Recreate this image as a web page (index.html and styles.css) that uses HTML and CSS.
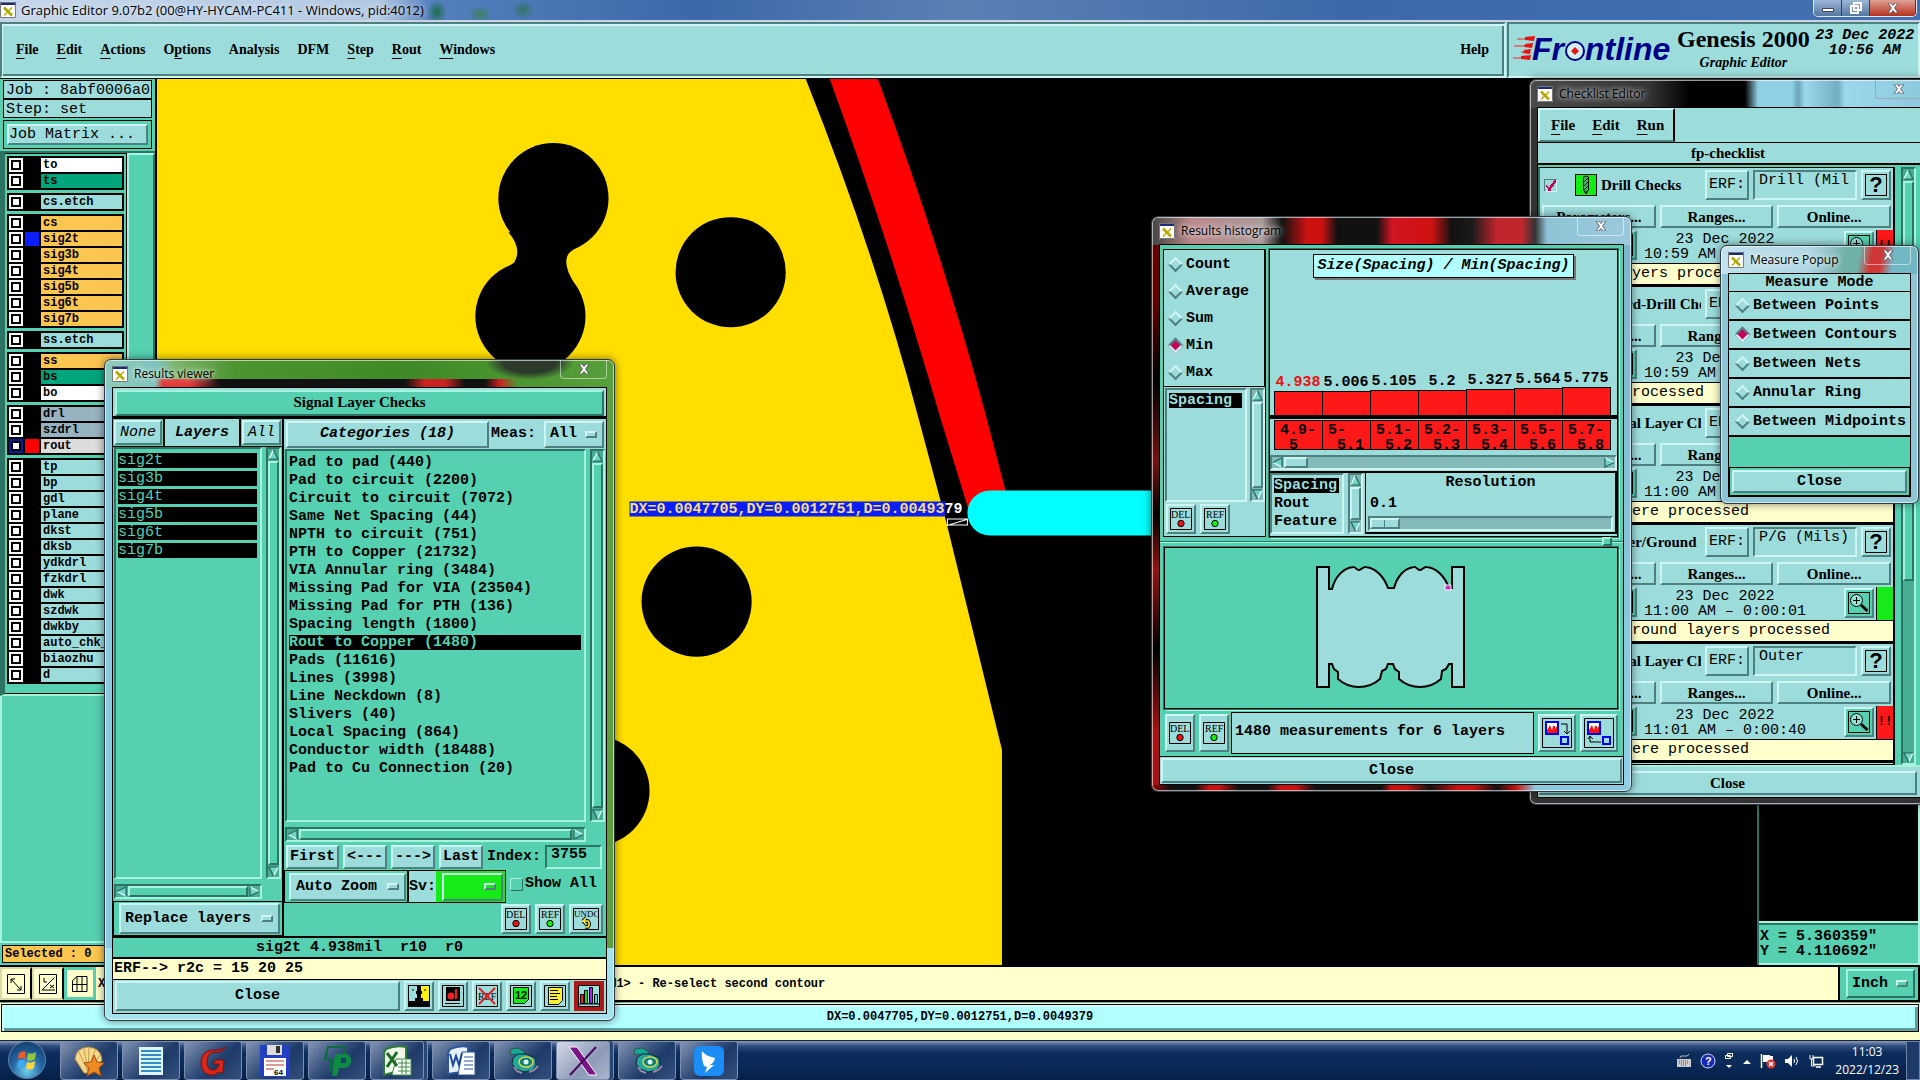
FILE: index.html
```html
<!DOCTYPE html>
<html lang="en">
<head>
    <meta charset="UTF-8">
    <meta name="viewport" content="width=device-width, initial-scale=1.0">
    <title>Graphic Editor 9.07b2</title>
    <link rel="stylesheet" href="styles.css">
</head>
<body>
    <!-- shared icons -->
    <svg class="defs" aria-hidden="true">
        <symbol id="i-app" viewBox="0 0 16 16">
            <rect width="16" height="16" fill="#fff"/>
            <path d="M0 0h16v3H0z" fill="#1b2a7a"/>
            <path d="M.5 .5h15v15H.5z" fill="none" stroke="#777"/>
            <path d="M4 5.500l8 8" stroke="#b5a800" stroke-width="2.600"/>
            <path d="M12 5.500l-8 8" stroke="#b5a800" stroke-width="1.400"/>
        </symbol>
        <symbol id="i-x" viewBox="0 0 12 10">
            <path d="M1 0h3l2 2.500L8 0h3L7.600 5 11 10H8L6 7.500 4 10H1l3.400-5z" fill="#fff" stroke="#445" stroke-width=".8"/>
        </symbol>
        <symbol id="i-up" viewBox="0 0 12 12">
            <path d="M6 1L1 11h10z" fill="#6fd6c4"/>
            <path d="M6 1L1 11" stroke="#d4fff6" stroke-width="1.500"/>
            <path d="M6 1l5 10H1" fill="none" stroke="#2d6f66" stroke-width="1.500"/>
        </symbol>
        <symbol id="i-del" viewBox="0 0 22 22">
            <path d="M.5 .5h21v21H.5z" fill="none" stroke="#000"/>
            <text x="1" y="10" font-family="Liberation Serif" font-weight="normal" font-size="10">DEL</text>
            <circle cx="11" cy="15.500" r="3.200" fill="#e11" stroke="#000"/>
        </symbol>
        <symbol id="i-ref" viewBox="0 0 22 22">
            <path d="M.5 .5h21v21H.5z" fill="none" stroke="#000"/>
            <text x="2" y="10" font-family="Liberation Serif" font-weight="normal" font-size="10">REF</text>
            <circle cx="11" cy="15.500" r="3.200" fill="#1e1" stroke="#000"/>
        </symbol>
        <symbol id="i-undo" viewBox="0 0 26 22">
            <path d="M.5 .5h25v21H.5z" fill="none" stroke="#000"/>
            <text x="1" y="9" font-family="Liberation Serif" font-weight="normal" font-size="9">UNDO</text>
            <path d="M12 19h3q2.500-3 0-6H10m0 0l3-3m-3 3l3 3" fill="none" stroke="#000" stroke-width="3.400"/>
            <path d="M12 19h3q2.500-3 0-6H10m0 0l3-3m-3 3l3 3" fill="none" stroke="#fe3" stroke-width="1.600"/>
        </symbol>
        <symbol id="i-zoom" viewBox="0 0 22 22">
            <path d="M.5 .5h21v21H.5z" fill="none" stroke="#000"/>
            <circle cx="8.500" cy="8.500" r="6" fill="#8fe0d0" stroke="#000"/>
            <path d="M5 8.500h7M8.500 5v7" stroke="#000"/>
            <path d="M13 13l6.500 6" stroke="#000" stroke-width="3"/>
        </symbol>
        <symbol id="i-run" viewBox="0 0 22 22">
            <rect width="22" height="22" fill="#000"/>
            <path d="M4 3h15v7H4zM4 13h15v6H4z" fill="#d22"/>
        </symbol>
        <symbol id="i-drill" viewBox="0 0 22 22">
            <rect x=".5" y=".5" width="21" height="21" fill="#1e1" stroke="#000"/>
            <path d="M8.500 3l2.500-1 2.500 1v13L11 20l-2.500-4z" fill="#3b6" stroke="#000"/>
            <path d="M9 8l4-4M9 12l4-4M9 16l4-4M11 17v3" stroke="#000"/>
        </symbol>
        <symbol id="i-shell" viewBox="0 0 32 32">
            <path d="M2 14Q3 3 15 2q13 1 14 13l-9 13h-9z" fill="#f6d98c" stroke="#b98a3c"/>
            <path d="M15 27L6 7M15 27L11 4M15 27L16 3M15 27l7-22M15 27l12-17" stroke="#c79b50"/>
            <path d="M21 10l3 7 7 1-5 5 2 8-7-4-7 4 2-8-5-5 7-1z" fill="#ef8a22" stroke="#a14d0c"/>
        </symbol>
        <symbol id="i-gear" viewBox="0 0 34 32">
            <path d="M5 4l7-1 7 4-3 3-8-1-4 1z" fill="#1a9" stroke="#354"/>
            <path d="M7 13l5-4 8 0 9 4 1 7-3 5-9 2-8-3-4-5z" fill="#1fa79b" stroke="#123"/>
            <ellipse cx="20" cy="17" rx="7" ry="5" fill="#0c7f78" stroke="#e3d24b" stroke-width="1.500"/>
            <circle cx="20" cy="17" r="2.500" fill="#d8f8f0"/>
            <path d="M8 22l3 4 5 2M23 27l5-2 4-4" stroke="#98a" stroke-width="2" fill="none"/>
        </symbol>
    </svg>

    <header class="titlebar">
        <svg class="app-icon"><use href="#i-app"/></svg>
        <span class="title-text">Graphic Editor 9.07b2 (00@HY-HYCAM-PC411 - Windows, pid:4012)</span>
        <div class="win-buttons">
            <button aria-label="Minimize"><svg width="12" height="10"><path d="M.5 5.500h11v3H.5z" fill="#fff" stroke="#445"/></svg></button>
            <button aria-label="Restore"><svg width="14" height="14"><path d="M5 2h7v7H5zM2 5h7v7H2z" fill="none" stroke="#fff" stroke-width="2"/></svg></button>
            <button class="close" aria-label="Close"><svg width="12" height="10"><use href="#i-x"/></svg></button>
        </div>
    </header>

    <div class="menubar">
        <nav class="menus">
            <button><u>F</u>ile</button>
            <button><u>E</u>dit</button>
            <button><u>A</u>ctions</button>
            <button>O<u>p</u>tions</button>
            <button>Analysis</button>
            <button>DFM</button>
            <button><u>S</u>tep</button>
            <button><u>R</u>out</button>
            <button><u>W</u>indows</button>
            <button class="help">Help</button>
        </nav>
        <div class="brand">
            <svg class="logo" width="162" height="32" viewBox="0 0 162 32">
                <path d="M4 5h13M1 12h16M8 18h8M0 24h13" stroke="#f22" stroke-width="1"/>
                <path d="M12 3l10-1-1 5-9-1zM12 10l8-1-1 5-8-1zM11 16l7-1-1 5-7-1zM8 22l10-1-1 5-9-1z" fill="#e11"/>
                <text x="19" y="26">Fr</text>
                <circle cx="62" cy="17" r="9" fill="#cfeff0" stroke="#000088" stroke-width="2"/>
                <path d="M62 13l4 4-4 4-4-4z" fill="#e11"/>
                <text x="72" y="26">ntline</text>
            </svg>
            <div class="product">
                <h1>Genesis 2000</h1>
                <em>Graphic Editor</em>
            </div>
            <div class="date">23 Dec 2022<br>10:56 AM</div>
        </div>
    </div>

    <main class="workspace">
        <aside class="sidebar">
            <div class="job-box">Job : 8abf0006a0</div>
            <div class="job-box">Step: set</div>
            <div class="job-matrix"><button class="btn">Job Matrix ...</button></div>
            <div class="layer-wrap">
                <div class="layers" id="layers"></div>
                <div class="layer-side"></div>
            </div>
            <div class="sidebar-fill"></div>
            <div class="selected">Selected : 0</div>
        </aside>

        <svg class="canvas" viewBox="157 80 1600 885" preserveAspectRatio="xMinYMin slice">
            <path d="M157 80H805Q874 253 918 420L946 525 1001 750V965H157z" fill="#ffde00"/>
            <path d="M829 80H877Q941 252 986 420L1005 493 967 508 940 420Q886 235 829 80z" fill="#f00"/>
            <path d="M1157 491H989a22.500 22.500 0 0 0 0 45h168z" fill="#0ff"/>
            <circle cx="730" cy="273" r="55"/>
            <circle cx="696" cy="602" r="55"/>
            <circle cx="594" cy="791" r="55"/>
            <circle cx="553" cy="199" r="55"/>
            <circle cx="530" cy="317" r="55"/>
            <path d="M508 233q14 16 6 30l-18 14 80 12-8-16q-6-16 4-22l20-16z"/>
            <path d="M629 502h315v15H629z" fill="#0a1ef5"/>
            <text x="629" y="514" class="measure">DX=0.0047705,DY=0.0012751,D=0.00493<tspan fill="#fff">79</tspan></text>
            <path d="M946.500 519.500h20v6h-20zM946 526l20-6" fill="none" stroke="#fff"/>
        </svg>

        <aside class="overview">
            <div class="coords">X = 5.360359"<br>Y = 4.110692"</div>
        </aside>
    </main>

    <div class="message-row">
        <button class="tool" aria-label="Snap off"><svg width="18" height="20"><path d="M.5 .5h17v19H.5zM4 5l10 11M4 9V5h4M14 12v4h-4" fill="none" stroke="#000"/></svg></button>
        <button class="tool" aria-label="Snap to edge"><svg width="18" height="20"><path d="M.5 .5h17v19H.5zM3 16L15 4M3 16h13M5 4v4h3M11 11l4 3m0-3l-4 3" fill="none" stroke="#000"/></svg></button>
        <button class="tool on" aria-label="Grid"><svg width="18" height="20"><path d="M1.500 6.500L6 2.500h10v15H1.500zM6 2.500v15M11 2.500v15M1.500 10.500H16" fill="none" stroke="#000"/></svg></button>
        <label class="cmd">X <input type="text" aria-label="Command"></label>
        <div class="message">&lt;M1&gt; - Re-select second contour</div>
        <div class="units">
            <span class="optmenu"><select aria-label="Units"><option>Inch</option></select></span>
        </div>
    </div>
    <div class="status"><div>DX=0.0047705,DY=0.0012751,D=0.0049379</div></div>

    <footer class="taskbar">
        <button class="orb" aria-label="Start">
            <svg width="22" height="22" viewBox="0 0 22 22">
                <path d="M3 4q4-3 7-1L9 10q-3-2-7 0z" fill="#f0582a"/>
                <path d="M12 4q4 2 8-1l-1 7q-4 3-8 1z" fill="#8fc73e"/>
                <path d="M2 12q4-3 7 0l-1 7q-3-2-7 0z" fill="#3fa9f5"/>
                <path d="M11 13q4 2 8-1l-1 7q-4 3-8 0z" fill="#fcd53b"/>
            </svg>
        </button>
        <button class="task" aria-label="Shell"><svg width="32" height="32"><use href="#i-shell"/></svg></button>
        <button class="task" aria-label="Notes"><svg width="26" height="30"><path d="M1 1h24v28H1z" fill="#dff3fb"/><path d="M3 5h20M3 9h20M3 13h20M3 17h20M3 21h20M3 25h20" stroke="#2d8fc4" stroke-width="2"/></svg></button>
        <button class="task" aria-label="G"><svg width="30" height="32"><path d="M27 2q-2 6-9 5-9 0-9 10 0 8 6 8 5 0 6-6h-6l2-4h9l-1 13-4-1q-4 4-9 3-9-2-9-13Q4 4 18 5q6 0 9-3z" fill="#d8261c" stroke="#7a0f0a"/></svg></button>
        <button class="task" aria-label="Save"><svg width="32" height="34"><path d="M1 1h30v32H3l-2-2z" fill="#2340c4"/><path d="M8 1h15v10H8z" fill="#ddd"/><path d="M17 2h4v7h-4z" fill="#333"/><path d="M5 14h22v18H5z" fill="#fff"/><path d="M7 17h18M7 21h18M7 25h8" stroke="#b33"/><text x="15" y="31" font-family="Liberation Sans" font-size="8">64</text></svg></button>
        <button class="task" aria-label="P"><svg width="30" height="32"><path d="M6 2h17v12H13L8 27V14H3z" fill="none" stroke="#0c6b3a" stroke-width="2"/><path d="M13 9h10q7 0 6 8-1 6-8 6h-4l-2 8h-5z" fill="#0f8a46"/><path d="M19 13h5v5h-5z" fill="#16406e"/></svg></button>
        <button class="task stack" aria-label="Excel"><svg width="30" height="32"><path d="M4 4q10-4 20-2v22L2 30V8z" fill="#eef7ea" stroke="#2c7a35" stroke-width="2"/><path d="M14 14h15v16H10z" fill="#fff" stroke="#3c8a40"/><path d="M16 18h12M16 22h12M16 26h12M20 15v14M24 15v14" stroke="#3c8a40"/><path d="M5 8l10 13M15 7L5 22" stroke="#1d6b2a" stroke-width="3"/></svg></button>
        <button class="task" aria-label="Word"><svg width="30" height="32"><path d="M4 4q10-4 18-2v24L2 29V8z" fill="#e8f0fb" stroke="#2b579a" stroke-width="2"/><path d="M16 7h13v23H12z" fill="#fff" stroke="#2b579a"/><path d="M18 12h9M18 16h9M18 20h9M18 24h9" stroke="#2b579a"/><path d="M4 9l3 11 3-9 3 9 3-12" fill="none" stroke="#1b4a94" stroke-width="2"/></svg></button>
        <button class="task" aria-label="Genesis"><svg width="34" height="32"><use href="#i-gear"/></svg></button>
        <button class="task stack active" aria-label="X server"><svg width="32" height="32"><path d="M2 2h8l20 28h-8z" fill="#7a1288" stroke="#fff"/><path d="M29 2L3 30" stroke="#4a0a5a" stroke-width="2"/></svg></button>
        <button class="task" aria-label="Genesis"><svg width="34" height="32"><use href="#i-gear"/></svg></button>
        <button class="task" aria-label="DingTalk"><svg width="30" height="30"><rect width="30" height="30" rx="6" fill="#1b8df5"/><path d="M8 5q3 5 13 7-1 5-5 7h4l-9 8 2-6-3-1q-3-8-2-15z" fill="#fff"/></svg></button>

        <div class="tray">
            <svg width="16" height="16"><path d="M1 6h14v8H1z" fill="#ccc"/><path d="M3 8h10M3 10h10M5 12h6" stroke="#555" stroke-dasharray="1 1"/><path d="M4 5q0-3 4-2t5-2" fill="none" stroke="#bbb"/></svg>
            <svg width="16" height="16"><circle cx="8" cy="8" r="7" fill="#1527b8" stroke="#dde"/><text x="5" y="12" fill="#fff" font-family="Liberation Sans" font-size="11" font-weight="bold">?</text></svg>
            <svg width="10" height="18"><path d="M3.500 1.500h5v3h-5zM1.500 3.500h5v3h-5z" fill="none" stroke="#fff"/><path d="M2 13h6l-3 3z" fill="#fff"/></svg>
            <svg width="10" height="14"><path d="M1 10h8L5 6z" fill="#fff"/></svg>
            <svg width="16" height="16"><path d="M1.500 1v14" stroke="#fff" stroke-width="1.500"/><path d="M3 2h7v1h3v6H3z" fill="#fff"/><circle cx="11" cy="11" r="4.500" fill="#d33"/><path d="M9 9l4 4m0-4l-4 4" stroke="#fff" stroke-width="1.500"/></svg>
            <svg width="16" height="16"><path d="M1 6h3l4-4v12l-4-4H1z" fill="#fff"/><path d="M10 6q1 2 0 4M12 4q3 4 0 8" fill="none" stroke="#fff"/></svg>
            <svg width="16" height="16"><path d="M5.500 4.500h9v7h-9zM8 14h5" fill="none" stroke="#fff" stroke-width="1.500"/><path d="M2 2v4h3V2M3.500 6v7h4" fill="none" stroke="#fff"/></svg>
            <time>11:03<br>2022/12/23</time>
        </div>
        <button class="peek" aria-label="Show desktop"></button>
    </footer>

    <!-- Checklist Editor -->
    <section class="window checklist">
        <div class="caption">
            <svg class="app-icon"><use href="#i-app"/></svg>
            <span>Checklist Editor</span>
            <button class="win-close" aria-label="Close"><svg width="12" height="10"><use href="#i-x"/></svg></button>
        </div>
        <div class="client">
            <nav class="chk-menu">
                <div class="chk-menu-box">
                    <button><u>F</u>ile</button>
                    <button><u>E</u>dit</button>
                    <button><u>R</u>un</button>
                </div>
            </nav>
            <div class="chk-name">fp-checklist</div>
            <div class="chk-body">
                <div class="chk-items" id="checks"></div>
                <div class="sb green"><svg class="arrow"><use href="#i-up"/></svg><i class="thumb"></i><i class="trough"></i><svg class="arrow down"><use href="#i-up"/></svg></div>
            </div>
            <div class="chk-close"><button class="btn serif">Close</button></div>
        </div>
    </section>

    <!-- Results histogram -->
    <section class="window histogram">
        <div class="caption">
            <svg class="app-icon"><use href="#i-app"/></svg>
            <span>Results histogram</span>
            <button class="win-close" aria-label="Close"><svg width="12" height="10"><use href="#i-x"/></svg></button>
        </div>
        <div class="client">
            <div class="hist-top">
                <div class="hist-left">
                    <div class="radios">
                        <label><input type="radio" name="stat"> Count</label>
                        <label><input type="radio" name="stat"> Average</label>
                        <label><input type="radio" name="stat"> Sum</label>
                        <label><input type="radio" name="stat" checked> Min</label>
                        <label><input type="radio" name="stat"> Max</label>
                    </div>
                    <div class="hist-list">
                        <ul class="list"><li class="sel">Spacing</li></ul>
                        <div class="sb"><svg class="arrow"><use href="#i-up"/></svg><i class="thumb"></i><svg class="arrow down"><use href="#i-up"/></svg></div>
                    </div>
                    <div class="icon-row">
                        <button class="btn icon" aria-label="Delete"><svg width="22" height="22"><use href="#i-del"/></svg></button>
                        <button class="btn icon" aria-label="Reference"><svg width="22" height="22"><use href="#i-ref"/></svg></button>
                    </div>
                </div>
                <div class="hist-right">
                    <div class="chart">
                        <div class="chart-title">Size(Spacing) / Min(Spacing)</div>
                        <div class="bars" id="bars"></div>
                        <div class="axis"></div>
                        <div class="ranges" id="ranges"></div>
                    </div>
                    <div class="sb horiz"><svg class="arrow left"><use href="#i-up"/></svg><i class="thumb small"></i><i class="trough"></i><svg class="arrow right"><use href="#i-up"/></svg></div>
                    <div class="hist-bottom">
                        <ul class="list"><li class="sel">Spacing</li><li>Rout</li><li>Feature</li></ul>
                        <div class="sb"><svg class="arrow"><use href="#i-up"/></svg><i class="thumb"></i><svg class="arrow down"><use href="#i-up"/></svg></div>
                        <label class="resolution">
                            <b>Resolution</b>
                            <span>0.1</span>
                            <input type="range" min="0" max="10" value="0">
                        </label>
                    </div>
                </div>
            </div>
            <div class="sash"><i></i></div>
            <div class="outline">
                <svg width="152" height="126" viewBox="0 0 152 126">
                    <path d="M2 2H14V24H17C20 12 28 3 38 2C40 1 41 5 44 5C47 5 48 1 51 2C61 3 69 12 73 23H79C82 12 89 3 99 2C101 1 102 5 105 5C108 5 109 1 112 2C122 3 130 12 134 23H137V2H149V122H137V99H134L131 104L127 106L126 114Q117 122 105 122Q93 122 84 114L84 107L80 104L78 99H73L71 104L67 106L65 114Q56 122 44 122Q32 122 23 114L23 107L19 104L17 99H14V122H2Z" fill="#9cdcdb" stroke="#000" stroke-width="2"/>
                    <path d="M130 20h6v5h-6z" fill="#c3c" stroke="#fff"/>
                </svg>
            </div>
            <div class="hist-info">
                <button class="btn icon" aria-label="Delete"><svg width="22" height="22"><use href="#i-del"/></svg></button>
                <button class="btn icon" aria-label="Reference"><svg width="22" height="22"><use href="#i-ref"/></svg></button>
                <output>1480 measurements for 6 layers</output>
                <button class="btn icon wide" aria-label="Next"><svg width="30" height="30"><path d="M.5 .5h29v29H.5z" fill="none" stroke="#000"/><path d="M4 4h12v12H4z" fill="#f11" stroke="#00e" stroke-width="2"/><path d="M5 5h10v3l-2 3V8h-2l-1 4-1-2-1-3-3 5z" fill="#fff"/><path d="M19 6h6v10m-3-3l3 3 3-3" fill="none" stroke="#000"/><path d="M19 19h7v7h-7z" fill="none" stroke="#00e" stroke-width="2"/></svg></button>
                <button class="btn icon wide" aria-label="Previous"><svg width="30" height="30"><path d="M.5 .5h29v29H.5z" fill="none" stroke="#000"/><path d="M4 4h12v12H4z" fill="#f11" stroke="#00e" stroke-width="2"/><path d="M5 5h10v3l-2 3V8h-2l-1 4-1-2-1-3-3 5z" fill="#fff"/><path d="M17 24H6v-6m-2 3l2-3 3 3" fill="none" stroke="#000"/><path d="M19 19h7v7h-7z" fill="none" stroke="#00e" stroke-width="2"/></svg></button>
            </div>
            <div class="hist-close"><button class="btn">Close</button></div>
        </div>
    </section>

    <!-- Measure Popup -->
    <section class="window measure-popup">
        <div class="caption">
            <svg class="app-icon"><use href="#i-app"/></svg>
            <span>Measure Popup</span>
            <button class="win-close" aria-label="Close"><svg width="12" height="10"><use href="#i-x"/></svg></button>
        </div>
        <div class="client">
            <div class="mode-title">Measure Mode</div>
            <div class="modes">
                <label><input type="radio" name="mode"> Between Points</label>
                <label><input type="radio" name="mode" checked> Between Contours</label>
                <label><input type="radio" name="mode"> Between Nets</label>
                <label><input type="radio" name="mode"> Annular Ring</label>
                <label><input type="radio" name="mode"> Between Midpoints</label>
            </div>
            <div class="mode-close"><button class="btn">Close</button></div>
        </div>
    </section>

    <!-- Results viewer -->
    <section class="window viewer">
        <div class="caption">
            <svg class="app-icon"><use href="#i-app"/></svg>
            <span>Results viewer</span>
            <button class="win-close" aria-label="Close"><svg width="12" height="10"><use href="#i-x"/></svg></button>
        </div>
        <div class="client">
            <div class="view-title"><div>Signal Layer Checks</div></div>
            <div class="view-main">
                <div class="view-left">
                    <div class="head">
                        <div class="cell"><button class="btn thin">None</button></div>
                        <div class="cell label">Layers</div>
                        <div class="cell"><button class="btn thin">All</button></div>
                    </div>
                    <div class="scroll-grid">
                        <ul class="list">
                            <li class="sel">sig2t</li>
                            <li class="sel">sig3b</li>
                            <li class="sel">sig4t</li>
                            <li class="sel">sig5b</li>
                            <li class="sel">sig6t</li>
                            <li class="sel">sig7b</li>
                        </ul>
                        <div class="sb green"><svg class="arrow"><use href="#i-up"/></svg><i class="thumb"></i><svg class="arrow down"><use href="#i-up"/></svg></div>
                        <div class="sb horiz green"><svg class="arrow left"><use href="#i-up"/></svg><i class="thumb"></i><svg class="arrow right"><use href="#i-up"/></svg></div>
                    </div>
                    <div class="replace"><span class="optmenu"><select aria-label="Layer action"><option>Replace layers</option></select></span></div>
                </div>
                <div class="view-right">
                    <div class="head cats">
                        <button class="btn">Categories (18)</button>
                        <label for="meas">Meas:</label>
                        <span class="optmenu"><select id="meas"><option>All</option></select></span>
                    </div>
                    <div class="scroll-grid">
                        <ul class="list" id="categories"></ul>
                        <div class="sb green"><svg class="arrow"><use href="#i-up"/></svg><i class="thumb"></i><svg class="arrow down"><use href="#i-up"/></svg></div>
                        <div class="sb horiz green"><svg class="arrow left"><use href="#i-up"/></svg><i class="thumb"></i><svg class="arrow right"><use href="#i-up"/></svg></div>
                    </div>
                    <div class="nav-row">
                        <button class="btn">First</button>
                        <button class="btn">&lt;---</button>
                        <button class="btn">---&gt;</button>
                        <button class="btn">Last</button>
                        <label for="index">Index:</label>
                        <input id="index" type="text" value="3755">
                    </div>
                    <div class="zoom-row">
                        <div class="boxed"><span class="optmenu"><select aria-label="Zoom"><option>Auto Zoom</option></select></span></div>
                        <div class="boxed sv"><label for="sv">Sv:</label><span class="optmenu lime"><select id="sv"><option></option></select></span></div>
                        <label class="show-all"><input type="checkbox"> Show All</label>
                    </div>
                    <div class="icon-row end">
                        <button class="btn icon" aria-label="Delete"><svg width="22" height="22"><use href="#i-del"/></svg></button>
                        <button class="btn icon" aria-label="Reference"><svg width="22" height="22"><use href="#i-ref"/></svg></button>
                        <button class="btn icon undo" aria-label="Undo"><svg width="26" height="22"><use href="#i-undo"/></svg></button>
                    </div>
                </div>
            </div>
            <div class="view-info">sig2t 4.938mil&nbsp; r10&nbsp; r0</div>
            <div class="view-erf">ERF--&gt; r2c = 15 20 25</div>
            <div class="view-bottom">
                <button class="btn grow">Close</button>
                <button class="btn icon" aria-label="Contrast"><svg width="22" height="22"><rect width="22" height="22" fill="#000"/><path d="M1 1h8v5h-1v3h1v4H7v3H1z" fill="#9cdcdb"/><path d="M13 1h8v15h-6v-3h-2V9h1V6h-1z" fill="#fe1"/><path d="M5 4v2M17 4v2" stroke="#000"/></svg></button>
                <button class="btn icon" aria-label="Camera"><svg width="22" height="22"><path d="M.5 .5h21v21H.5z" fill="none" stroke="#000"/><path d="M4 2h14v14H4z"/><circle cx="9" cy="11" r="3.500" fill="#e22"/><path d="M14 4v10" stroke="#e22" stroke-width="2"/><path d="M3 18.500h15" stroke="#000"/></svg></button>
                <button class="btn icon" aria-label="No reference"><svg width="22" height="22"><path d="M.5 .5h21v21H.5z" fill="none" stroke="#000"/><text x="2" y="15" font-family="Liberation Serif" font-weight="normal" font-size="10">REF</text><path d="M3 3l16 16M19 3L3 19" stroke="#d22" stroke-width="2"/></svg></button>
                <button class="btn icon" aria-label="Numbering"><svg width="22" height="22"><path d="M.5 .5h21v21H.5z" fill="none" stroke="#000"/><path d="M3.500 2.500h15v12l-4 4h-11z" fill="#1e1" stroke="#000"/><text x="5" y="14" font-family="Liberation Sans" font-size="11" font-weight="bold">12</text></svg></button>
                <button class="btn icon" aria-label="Report"><svg width="22" height="22"><path d="M.5 .5h21v21H.5z" fill="none" stroke="#000"/><path d="M4.500 2.500h14v13l-4 4h-10z" fill="#fe3" stroke="#000"/><path d="M6 5.500h8M6 8.500h10M6 11.500h7M6 14.500h8" stroke="#000"/></svg></button>
                <button class="btn icon hot" aria-label="Histogram"><svg width="22" height="22"><path d="M.5 .5h21v21H.5z" fill="#9cdcdb" stroke="#000"/><path d="M2.500 9.500h3v9h-3z" fill="#e22" stroke="#000"/><path d="M6.500 5.500h3v13h-3z" fill="#1d1" stroke="#000"/><path d="M11.500 2.500h3v16h-3z" fill="#a2e" stroke="#000"/><path d="M16.500 9.500h3v9h-3z" fill="#2dd" stroke="#000"/><path d="M1 19h20" stroke="#000"/></svg></button>
            </div>
        </div>
    </section>

    <script>
        // layer groups: name, background class, display colour
        const layerGroups = [
            [['to', 'white'], ['ts', 'mask']],
            [['cs.etch', '']],
            [['cs', 'signal'], ['sig2t', 'signal', 'blue'], ['sig3b', 'signal'], ['sig4t', 'signal'], ['sig5b', 'signal'], ['sig6t', 'signal'], ['sig7b', 'signal']],
            [['ss.etch', '']],
            [['ss', 'signal'], ['bs', 'mask'], ['bo', 'white']],
            [['drl', 'drill'], ['szdrl', 'drill'], ['rout', 'rout', 'red']],
            ['tp', 'bp', 'gdl', 'plane', 'dkst', 'dksb', 'ydkdrl', 'fzkdrl', 'dwk', 'szdwk', 'dwkby', 'auto_chk_', 'biaozhu', 'd'].map(n => [n, ''])
        ];

        document.getElementById('layers').innerHTML = layerGroups.map(group =>
            '<div class="layer-group">' + group.map(([name, kind, on]) =>
                `<label class="layer ${kind}"><input type="checkbox"><i class="swatch ${on || ''}"></i><span>${name}</span></label>`
            ).join('') + '</div>'
        ).join('');

        const categories = [
            'Pad to pad (440)', 'Pad to circuit (2200)', 'Circuit to circuit (7072)', 'Same Net Spacing (44)',
            'NPTH to circuit (751)', 'PTH to Copper (21732)', 'VIA Annular ring (3484)', 'Missing Pad for VIA (23504)',
            'Missing Pad for PTH (136)', 'Spacing length (1800)', 'Rout to Copper (1480)', 'Pads (11616)',
            'Lines (3998)', 'Line Neckdown (8)', 'Slivers (40)', 'Local Spacing (864)',
            'Conductor width (18488)', 'Pad to Cu Connection (20)'
        ];
        document.getElementById('categories').innerHTML = categories.map(c =>
            `<li class="${c.startsWith('Rout') ? 'sel' : ''}">${c}</li>`
        ).join('');

        // value, bar height, range from, range to
        const bars = [
            ['4.938', 24, '4.9-', '5'], ['5.006', 24, '5-', '5.1'], ['5.105', 25, '5.1-', '5.2'], ['5.2', 25, '5.2-', '5.3'],
            ['5.327', 26, '5.3-', '5.4'], ['5.564', 27, '5.5-', '5.6'], ['5.775', 28, '5.7-', '5.8']
        ];
        document.getElementById('bars').innerHTML = bars.map(b =>
            `<div><span>${b[0]}</span><i style="height:${b[1]}px"></i></div>`
        ).join('');
        document.getElementById('ranges').innerHTML = bars.map(b =>
            `<div>${b[2]}<br>&nbsp;${b[3]}</div>`
        ).join('');

        const checks = [
            ['Drill Checks', 'Drill (Mil', '10:59 AM – 0:00:01', '1 drill layers processed', '!!'],
            ['Board-Drill Checks', 'Board', '10:59 AM – 0:00:02', '6 layers processed', '!!'],
            ['Signal Layer Checks', 'Inner', '11:00 AM – 0:00:30', '6 layers were processed', '!!'],
            ['Power/Ground Checks', 'P/G (Mils)', '11:00 AM – 0:00:01', 'No power/ground layers processed', ''],
            ['Signal Layer Checks', 'Outer', '11:01 AM – 0:00:40', '2 layers were processed', '!!']
        ];
        document.getElementById('checks').innerHTML = checks.map(([name, erf, time, text, flag]) => `
            <article class="check">
                <div class="check-top">
                    <input type="checkbox" checked aria-label="${name}">
                    <svg class="kind" width="22" height="22"><use href="#i-drill"/></svg>
                    <span class="name">${name}</span>
                    <button class="btn erf">ERF:</button>
                    <input type="text" value="${erf}" aria-label="ERF model">
                    <button class="btn q"><span>?</span></button>
                </div>
                <div class="check-btns">
                    <button class="btn serif">Parameters...</button>
                    <button class="btn serif">Ranges...</button>
                    <button class="btn serif">Online...</button>
                </div>
                <div class="check-time">
                    <button class="btn icon run" aria-label="Run"><svg width="22" height="22"><use href="#i-run"/></svg></button>
                    <div class="when">23 Dec 2022<br>${time}</div>
                    <button class="btn icon zoom" aria-label="Results"><svg width="22" height="22"><use href="#i-zoom"/></svg></button>
                    <div class="flag ${flag ? 'bad' : 'ok'}">${flag}</div>
                </div>
                <div class="check-text">${text}</div>
            </article>`
        ).join('');
    </script>
</body>
</html>
```
FILE: styles.css
```css
*, *::after {
    box-sizing: border-box;
}

:root {
    --teal: #9cdcdb;
    --teal-hi: #cdf5f3;
    --teal-lo: #4f8080;
    --green: #55d0b1;
    --green-hi: #a6f4e0;
    --green-lo: #2c7363;
    --cream: #ffffcc;
}

body {
    margin: 0;
    height: 100vh;
    display: flex;
    flex-direction: column;
    overflow: hidden;
    position: relative;
    background: #000;
    font: bold 15px/18px "Liberation Mono", monospace;
    color: #000;
}

button, input, select {
    font: inherit;
    color: inherit;
    margin: 0;
    border-radius: 0;
}

button {
    padding: 0;
    border: none;
    background: none;
}

svg {
    display: block;
    flex: none;
}

.defs {
    display: none;
}

.app-icon {
    width: 16px;
    height: 16px;
}

/* ---- main title bar ---- */
.titlebar {
    height: 22px;
    display: flex;
    align-items: center;
    gap: 5px;
    flex: none;
    font: 13px/18px "Open Sans", sans-serif;
    background:
        radial-gradient(ellipse 10px 12px at 437px 12px, #1d6b4c, transparent),
        radial-gradient(ellipse 12px 8px at 480px 14px, #3a8060, transparent),
        radial-gradient(ellipse 12px 10px at 523px 10px, #2f7468, transparent),
        linear-gradient(90deg, #c5d6ea 0, #b3c9e3 380px, #5580be 430px, #3c68aa 700px, #5b80b4 50%, #3d69ab 70%, #4270b2);
    border-bottom: 2px solid #c8d4e4;
}

.title-text {
    text-shadow: 0 0 6px #fff;
}

.win-buttons {
    display: flex;
    align-self: flex-start;
    margin-left: auto;
    margin-right: 3px;
    border: 1px solid #dbe6f5;
    border-top: none;
    border-radius: 0 0 5px 5px;
    overflow: hidden;
}

.win-buttons button {
    width: 28px;
    height: 16px;
    display: flex;
    align-items: center;
    justify-content: center;
    background: linear-gradient(#9db6d8, #55779f);
    border-right: 1px solid #24406c;
}

.win-buttons .close {
    width: 46px;
    background: linear-gradient(#e0a196, #b8311c);
}

/* ---- menu bar ---- */
.menubar {
    display: flex;
    gap: 1px;
    height: 56px;
    flex: none;
    background: var(--teal);
}

.menus {
    flex: 1;
    display: flex;
    align-items: center;
    gap: 18px;
    padding: 0 15px 0 14px;
    border: 2px solid;
    border-color: var(--teal-lo) var(--teal-hi) var(--teal-hi) var(--teal-lo);
    box-shadow: inset 1px 2px var(--teal-hi), inset -2px -2px var(--teal-lo);
    font: bold 14px/18px "Liberation Serif", serif;
}

u {
    text-underline-offset: 4px;
}

.help {
    margin-left: auto;
}

.brand {
    width: 413px;
    display: flex;
    align-items: center;
    gap: 2px;
    padding-left: 4px;
    border: 2px solid;
    border-color: var(--teal-lo) var(--teal-hi) var(--teal-hi) var(--teal-lo);
}

.logo text {
    font: italic bold 32px "Liberation Sans", sans-serif;
    fill: #000088;
}

.product {
    text-align: center;
    font-family: "Liberation Serif", serif;
    white-space: nowrap;
}

.product h1 {
    margin: 0;
    font-size: 24px;
    line-height: 26px;
}

.product em {
    font-size: 14px;
    line-height: 22px;
    display: block;
}

.date {
    flex: 1;
    align-self: flex-start;
    padding-top: 4px;
    text-align: center;
    font-style: italic;
    line-height: 15px;
    white-space: nowrap;
}

/* ---- workspace ---- */
.workspace {
    flex: 1;
    min-height: 0;
    display: flex;
    border-top: 1px solid #000;
}

.sidebar {
    width: 157px;
    flex: none;
    display: flex;
    flex-direction: column;
    background: var(--green);
    border-right: 2px solid #000;
    font-weight: normal;
}

.job-box {
    margin: 1px 3px 0;
    padding: 0 2px;
    height: 19px;
    line-height: 19px;
    background: var(--teal);
    border: 1px solid #000;
    white-space: nowrap;
}

.job-box + .job-box {
    margin-top: 0;
}

.job-matrix {
    margin: 2px 3px;
    padding: 3px;
    border: 1px solid #000;
}

.job-matrix .btn {
    width: 100%;
    height: 21px;
    text-align: left;
    padding-left: 0;
    font-weight: normal;
}

.layer-wrap {
    display: flex;
    border-top: 2px solid var(--green-lo);
    border-left: 5px solid var(--green-lo);
    border-bottom: 2px solid var(--green-hi);
}

.layers {
    width: 122px;
    padding: 2px 2px 9px;
    display: flex;
    flex-direction: column;
    gap: 3px;
    border: 1px solid #000;
    border-left: 0;
}

.layer-side {
    flex: 1;
    border: 2px solid var(--green-hi);
    border-right-color: var(--green-lo);
    border-bottom: none;
}

.layer-group {
    display: flex;
    flex-direction: column;
    gap: 2px;
    padding: 2px;
    background: #000;
}

.layer {
    display: flex;
    gap: 2px;
    height: 14px;
    font: bold 12px/14px "Liberation Mono", monospace;
}

.layer input {
    appearance: none;
    width: 14px;
    height: 14px;
    background: #fff;
    border: 2px solid #fff;
    outline: 2px solid #000;
    outline-offset: -4px;
}

.layer.rout input {
    border-color: #0a1a9a;
}

.swatch {
    width: 14px;
}

.swatch.blue {
    background: #0a1eff;
}

.swatch.red {
    background: #f00;
}

.layer span {
    flex: 1;
    padding-left: 2px;
    background: var(--teal);
}

.layer.white span {
    background: #fff;
}

.layer.mask span {
    background: #00a57c;
}

.layer.signal span {
    background: #fdc650;
}

.layer.drill span {
    background: #97b3bf;
}

.layer.rout span {
    background: #dcdcdc;
}

.sidebar-fill {
    flex: 1;
    border-left: 2px solid var(--green-hi);
    border-bottom: 2px solid var(--green-hi);
}

.selected {
    margin: 2px;
    padding-left: 2px;
    height: 18px;
    font: bold 12px/16px "Liberation Mono", monospace;
    background: #fdc650;
    border: 1px solid #000;
}

.canvas {
    flex: 1;
    width: 0;
    height: 100%;
    background: #000;
}

.canvas .measure {
    font: bold 15px "Liberation Mono", monospace;
    fill: #f5dc80;
}

.overview {
    width: 163px;
    flex: none;
    display: flex;
    flex-direction: column;
    justify-content: flex-end;
    border-left: 2px solid var(--green-lo);
    border-right: 2px solid var(--green-hi);
}

.coords {
    padding: 6px 1px;
    line-height: 15px;
    background: var(--green);
    border-top: 2px solid var(--green-hi);
    border-bottom: 2px solid var(--green-hi);
    box-shadow: inset 0 2px var(--green-lo);
    height: 44px;
}

/* ---- message rows ---- */
.message-row {
    display: flex;
    height: 37px;
    flex: none;
    align-items: stretch;
    background: var(--cream);
    border-top: 2px solid #000;
    border-bottom: 2px solid #000;
    font: bold 12px/18px "Liberation Mono", monospace;
}

.tool {
    width: 32px;
    display: flex;
    align-items: center;
    justify-content: center;
    border: 2px solid #d8d8a8;
    border-right: 2px solid #000;
}

.tool.on {
    border: 3px solid var(--green);
}

.cmd {
    width: 506px;
    display: flex;
    align-items: center;
    gap: 4px;
    padding-left: 2px;
}

.cmd input {
    flex: 1;
    border: none;
    background: none;
}

.message {
    flex: 1;
    align-self: center;
}

.units {
    padding: 2px 3px 2px 6px;
    display: flex;
    background: var(--green);
    border-left: 2px solid #000;
    border-right: 2px solid #000;
    font-size: 15px;
}

.units .optmenu {
    width: 69px;
    background: var(--green);
    border-color: var(--green-hi) var(--green-lo) var(--green-lo) var(--green-hi);
}

.status {
    flex: none;
    height: 38px;
    padding: 1px 1px 9px;
    background: var(--cream);
    border-top: 1px solid #6f9f9f;
}

.status div {
    height: 28px;
    border: 1px solid #000;
    background: #b2ffff;
    box-shadow: inset 2px 2px #d8ffff, inset -3px -3px #5f9c9c;
    text-align: center;
    font: bold 12px/24px "Liberation Mono", monospace;
}

/* ---- taskbar ---- */
.taskbar {
    flex: none;
    height: 40px;
    display: flex;
    gap: 4px;
    background: linear-gradient(#8d9bb8 0, #2e4d7e 5px, #0c2c5c 12px, #0a2a5a 60%, #061f45);
    border-top: 1px solid #14263f;
}

.orb {
    width: 38px;
    height: 38px;
    margin: 0 10px 0 8px;
    border-radius: 50%;
    display: flex;
    align-items: center;
    justify-content: center;
    background: radial-gradient(circle at 50% 80%, #6fd0f0, #24669f 45%, #10305c);
    border: 1px solid #5d84ad;
}

.task {
    width: 58px;
    display: flex;
    align-items: center;
    justify-content: center;
    border: 1px solid #7c8fb0;
    border-radius: 3px;
    background: linear-gradient(135deg, #8394b3, #3a5580 40%, #1d3a68 60%, #35507d);
}

.task.stack {
    width: 54px;
    margin-right: 4px;
    box-shadow: 3px 0 #2a4675, 4px 0 #7c8fb0;
}

.task.active {
    background: linear-gradient(135deg, #d5dbe8, #8d9bb8 60%, #a9b4cc);
}

.tray {
    margin-left: auto;
    display: flex;
    align-items: center;
    gap: 8px;
    color: #fff;
}

.tray time {
    padding: 0 3px;
    text-align: center;
    font: 12px/18px "Open Sans", sans-serif;
}

.peek {
    width: 14px;
    border: 1px solid #6d82a5;
    background: #1d3a68;
}

/* ---- shared widgets ---- */
.btn {
    background: var(--teal);
    border: 2px solid;
    border-color: var(--teal-hi) var(--teal-lo) var(--teal-lo) var(--teal-hi);
    white-space: nowrap;
}

.serif {
    font-family: "Liberation Serif", serif;
}

.icon {
    width: 30px;
    height: 30px;
    flex: none;
    display: flex;
    align-items: center;
    justify-content: center;
}

.icon-row {
    display: flex;
    gap: 4px;
}

.optmenu {
    display: flex;
    align-items: center;
    background: var(--teal);
    border: 2px solid;
    border-color: var(--teal-hi) var(--teal-lo) var(--teal-lo) var(--teal-hi);
    padding: 0 5px 0 4px;
}

.optmenu select {
    appearance: none;
    flex: 1;
    min-width: 0;
    padding: 0;
    border: none;
    background: none;
}

.optmenu::after {
    content: "";
    width: 12px;
    height: 7px;
    border: 2px solid;
    border-color: var(--teal-hi) var(--teal-lo) var(--teal-lo) var(--teal-hi);
}

.list {
    margin: 0;
    padding: 3px 3px 3px 2px;
    list-style: none;
    border: 2px solid;
    border-color: var(--teal-lo) var(--teal-hi) var(--teal-hi) var(--teal-lo);
    overflow: hidden;
}

.list li {
    height: 15px;
    margin-bottom: 3px;
    line-height: 15px;
    white-space: nowrap;
}

.list .sel {
    background: #000;
    color: var(--teal);
}

/* scroll bars */
.sb {
    width: 15px;
    display: flex;
    flex-direction: column;
    align-items: stretch;
    gap: 1px;
    border: 2px solid;
    border-color: var(--teal-lo) var(--teal-hi) var(--teal-hi) var(--teal-lo);
    background: #83b9b9;
}

.sb .arrow {
    width: 11px;
    height: 11px;
}

.sb .down {
    transform: rotate(180deg);
}

.sb .left {
    transform: rotate(-90deg);
}

.sb .right {
    transform: rotate(90deg);
}

.sb .thumb {
    flex: 1;
    background: var(--teal);
    border: 2px solid;
    border-color: var(--teal-hi) var(--teal-lo) var(--teal-lo) var(--teal-hi);
}

.sb.horiz {
    width: auto;
    height: 15px;
    flex-direction: row;
}

.sb.green {
    background: #47ae95;
    border-color: var(--green-lo) var(--green-hi) var(--green-hi) var(--green-lo);
}

.sb.green .thumb {
    background: var(--green);
    border-color: var(--green-hi) var(--green-lo) var(--green-lo) var(--green-hi);
}

/* diamond radio buttons */
input[type="radio"] {
    appearance: none;
    flex: none;
    width: 11px;
    height: 11px;
    margin: 0 5px 0 3px;
    border: 2px solid;
    border-color: var(--teal-hi) var(--teal-lo) var(--teal-lo) var(--teal-hi);
    transform: rotate(45deg);
}

input[type="radio"]:checked {
    background: #c8005a;
    border-color: var(--teal-lo) var(--teal-hi) var(--teal-hi) var(--teal-lo);
}

/* ---- floating windows ---- */
.window {
    position: absolute;
    display: flex;
    flex-direction: column;
    padding: 0 7px 6px;
    border: 1px solid #2b3b44;
    border-radius: 7px;
    box-shadow: inset 0 0 0 1px rgba(255, 255, 255, 0.6), 0 0 8px rgba(0, 0, 0, 0.5);
}

.caption {
    height: 27px;
    flex: none;
    display: flex;
    align-items: center;
    gap: 6px;
    font: 12px/18px "Open Sans", sans-serif;
}

.caption span {
    text-shadow: 0 0 5px rgba(255, 255, 255, 0.8), 0 0 8px rgba(255, 255, 255, 0.8);
}

.win-close {
    width: 47px;
    height: 19px;
    margin-left: auto;
    align-self: flex-start;
    display: flex;
    align-items: center;
    justify-content: center;
    border: 1px solid rgba(255, 255, 255, 0.5);
    border-top: none;
    border-radius: 0 0 4px 4px;
}

.client {
    flex: 1;
    display: flex;
    flex-direction: column;
    border: 1px solid #000;
    background: var(--teal);
}

/* Results viewer */
.viewer {
    left: 104px;
    top: 359px;
    width: 511px;
    background:
        linear-gradient(90deg, transparent 50px, #e23a3a 58px, #e23a3a 85px, #111 115px, #111 300px, #c22 320px, #c22 340px, #111 360px, #111 380px, #c22 395px, transparent 412px) 0 19px / 100% 9px no-repeat,
        radial-gradient(ellipse 44px 18px at 425px 2px, #2c3a2c 60%, transparent) 0 0 / 100% 28px no-repeat,
        linear-gradient(90deg, #8fcaba 0, #7dc4bd 52px, #7db56a 70px, #4d9430 130px, #3f8a26 60%, #57a03c) 0 0 / 100% 28px no-repeat,
        linear-gradient(90deg, #8cc8e0 0, #8cc8e0 50%, #5f9e3c 51%) 0 28px / 100% 560px no-repeat,
        #a5e2ee;
}

.view-title {
    padding: 2px;
    height: 31px;
    border-bottom: 3px solid #000;
}

.view-title div {
    height: 26px;
    border: 2px solid;
    border-color: var(--green-hi) var(--green-lo) var(--green-lo) var(--green-hi);
    background: var(--green);
    text-align: center;
    font: bold 15px/20px "Liberation Serif", serif;
}

.view-main {
    display: flex;
    background: var(--green);
    border-bottom: 2px solid #000;
}

.view-left {
    width: 171px;
    display: flex;
    flex-direction: column;
    border-right: 2px solid #000;
}

.view-right {
    flex: 1;
    display: flex;
    flex-direction: column;
}

.head {
    display: flex;
    height: 28px;
    font-style: italic;
}

.head .cell {
    padding: 1px;
    border-right: 2px solid #000;
    border-bottom: 1px solid #000;
}

.head .cell:last-child {
    border-right: none;
}

.head .thin {
    height: 25px;
    font-weight: normal;
    font-style: italic;
    padding: 0 4px;
}

.head .cell.label {
    flex: 1;
    text-align: center;
    line-height: 25px;
    background: var(--teal);
}

.cats {
    background: var(--teal);
    padding: 1px 2px;
    align-items: center;
    height: 30px;
}

.cats .btn {
    flex: 1;
    height: 27px;
    font-style: italic;
}

.cats label {
    font-style: normal;
    padding: 0 8px 0 2px;
}

.cats .optmenu {
    width: 60px;
    height: 27px;
    font-style: normal;
}

.scroll-grid {
    flex: 1;
    display: grid;
    grid-template-columns: 1fr 15px;
    grid-template-rows: 1fr 15px;
    gap: 5px 4px;
    padding: 0 1px 2px;
}

.scroll-grid .list {
    padding-top: 4px;
    border-color: var(--green-lo) var(--green-hi) var(--green-hi) var(--green-lo);
}

.scroll-grid .sel {
    color: var(--green);
}

.view-left .sel {
    font-weight: normal;
}

.view-right .list {
    min-height: 373px;
}

.replace {
    padding: 1px 2px 1px 5px;
    border: 1px solid #000;
    border-right: none;
}

.replace .optmenu {
    height: 31px;
}

.nav-row {
    display: flex;
    align-items: center;
    gap: 4px;
    height: 25px;
    padding: 0 4px 0 2px;
}

.nav-row .btn {
    height: 24px;
    padding: 0 2px;
}

.nav-row input {
    flex: 1;
    width: 0;
    height: 24px;
    padding: 0 4px 4px;
    background: none;
    border: 2px solid;
    border-color: var(--green-lo) var(--green-hi) var(--green-hi) var(--green-lo);
}

.zoom-row {
    display: flex;
    height: 33px;
    margin-top: 1px;
}

.boxed {
    display: flex;
    align-items: center;
    border: 1px solid #000;
    padding: 1px 1px 1px 4px;
}

.boxed .optmenu {
    width: 117px;
    height: 28px;
    padding-left: 5px;
}

.boxed.sv {
    padding-left: 0;
    padding-right: 2px;
    background: linear-gradient(90deg, var(--teal) 27px, #17eb17 27px);
}

.boxed .lime {
    margin-left: 6px;
    width: 61px;
    background: #17eb17;
}

.show-all {
    display: flex;
    align-items: center;
    gap: 2px;
    padding: 0 0 5px 4px;
    white-space: nowrap;
}

.show-all input {
    appearance: none;
    width: 13px;
    height: 13px;
    border: 1px solid;
    border-color: var(--green-hi) var(--green-lo) var(--green-lo) var(--green-hi);
}

.icon-row.end {
    justify-content: flex-end;
    padding: 1px 3px 2px;
}

.icon.undo {
    width: 34px;
}

.view-info {
    height: 21px;
    line-height: 20px;
    text-align: center;
    background: var(--green);
    border-bottom: 2px solid #000;
}

.view-erf {
    height: 21px;
    padding-left: 1px;
    line-height: 20px;
    background: var(--cream);
    border-bottom: 1px solid #000;
}

.view-bottom {
    display: flex;
    gap: 4px;
    padding: 1px 2px 2px;
}

.grow {
    flex: 1;
}

.icon.hot {
    background: #b01818;
    border-color: #b01818;
}

/* Results histogram */
.histogram {
    left: 1151px;
    top: 216px;
    width: 481px;
    background:
        linear-gradient(90deg, #444 0, #b88 40px, #a99 110px, #111 130px, #c11 155px, #c11 170px, #111 185px, #111 225px, #d11522 240px, #c11 280px, #111 300px, #1a1a1a 320px, #c1262c 345px, #c1262c 370px, #333 383px, #8ec4d6 395px, #9cc8dc) 0 0 / 100% 28px no-repeat,
        linear-gradient(#600 0, #600 10%, #000 25%, #711 40%, #000 50%, #911 60%, #000 75%, #a11 90%) 0 28px / 50% 540px no-repeat,
        linear-gradient(#7fb4cc, #90d0e8) 100% 28px / 50% 540px no-repeat,
        linear-gradient(90deg, #900 0, #111 4%, #111 9%, #c11 12%, #c11 14%, #111 18%, #111 24%, #c11 27%, #c11 30%, #111 34%, #111 48%, #c11 50%, #c11 53%, #111 58%, #c11 64%, #c11 67%, #111 72%, #c11 76%, #8cc8dc 80%);
}

.histogram .client {
    background: var(--green);
}

.hist-top {
    display: flex;
    gap: 3px;
    margin: 4px 5px 0 3px;
}

.hist-left {
    width: 103px;
    background: var(--teal);
    border: 1px solid #000;
}

.radios {
    padding-top: 1px;
    border-bottom: 1px solid #000;
    border-right: 1px solid #000;
}

.radios label {
    display: flex;
    align-items: center;
    height: 27px;
    padding-left: 3px;
}

.hist-list {
    display: flex;
    justify-content: space-between;
    height: 116px;
    padding: 1px 0 1px 1px;
}

.hist-list .list {
    width: 82px;
}

.hist-left .icon-row {
    padding: 1px 2px 2px;
}

.hist-right {
    flex: 1;
    display: flex;
    flex-direction: column;
    background: var(--teal);
    border: 1px solid #000;
    box-shadow: 0 0 0 1px var(--green-lo), 2px 2px var(--green-hi);
}

.chart {
    height: 205px;
    display: flex;
    flex-direction: column;
}

.chart-title {
    align-self: center;
    margin-top: 4px;
    padding: 1px 3px;
    background: #b2ffff;
    border: 1px solid #000;
    box-shadow: 2px 2px #777;
    font-style: italic;
    line-height: 20px;
}

.bars {
    flex: 1;
    display: flex;
    align-items: flex-end;
    padding: 0 4px;
    line-height: 16px;
}

.bars div {
    width: 48px;
    text-align: center;
}

.bars div:first-child {
    color: #e11;
}

.bars i {
    display: block;
    margin-right: -1px;
    background: #ff1818;
    border: 1px solid #000;
    border-bottom: none;
}

.axis {
    height: 4px;
    background: #000;
}

.ranges {
    display: flex;
    margin: 1px 4px 5px;
}

.ranges div {
    width: 48px;
    height: 30px;
    padding: 2px 0 0 5px;
    background: #ff1818;
    box-shadow: 1px 0 #000;
    border: 1px solid #000;
    border-right: none;
    line-height: 15px;
}

.hist-right .sb .small {
    flex: none;
    width: 24px;
}

.hist-right .trough {
    flex: 1;
}

.hist-bottom {
    display: flex;
    margin-top: 1px;
    border-top: 2px solid #000;
}

.hist-bottom .list {
    width: 74px;
    padding-bottom: 0;
    margin-right: 4px;
}

.resolution {
    flex: 1;
    display: flex;
    flex-direction: column;
    gap: 1px;
    padding: 1px 2px;
    border-left: 1px solid #000;
    border-right: 2px solid #000;
    border-bottom: 2px solid #000;
    margin-left: 2px;
}

.resolution b {
    text-align: center;
}

.resolution span {
    padding-left: 2px;
    line-height: 22px;
}

.resolution input {
    appearance: none;
    width: 100%;
    height: 15px;
    background: #83b9b9;
    border: 2px solid;
    border-color: var(--teal-lo) var(--teal-hi) var(--teal-hi) var(--teal-lo);
}

.resolution input::-webkit-slider-thumb {
    appearance: none;
    width: 30px;
    height: 11px;
    border: 2px solid;
    border-color: var(--teal-hi) var(--teal-lo) var(--teal-lo) var(--teal-hi);
    background: linear-gradient(90deg, var(--teal) 12px, var(--teal-lo) 12px, var(--teal-lo) 13px, var(--teal) 13px);
}

.sash {
    height: 9px;
    display: flex;
    justify-content: flex-end;
    padding-right: 11px;
    background: linear-gradient(transparent 4px, var(--green-lo) 4px, var(--green-lo) 5px, var(--green-hi) 5px, var(--green-hi) 6px, transparent 6px);
}

.sash i {
    width: 10px;
    background: var(--green);
    border: 2px solid;
    border-color: var(--green-hi) var(--green-lo) var(--green-lo) var(--green-hi);
}

.outline {
    height: 162px;
    margin: 1px 5px 2px 4px;
    display: flex;
    justify-content: center;
    align-items: center;
    border: 1px solid #000;
    box-shadow: 0 0 0 1px var(--green-lo), 2px 2px var(--green-hi);
}

.hist-info {
    display: flex;
    gap: 4px;
    height: 42px;
    margin: 1px 5px 2px 5px;
}

.hist-info .icon {
    height: 38px;
    margin-top: 2px;
}

.hist-info .icon.wide {
    width: 38px;
}

.hist-info output {
    flex: 1;
    margin-left: -2px;
    padding-left: 3px;
    line-height: 38px;
    background: var(--teal);
    border: 1px solid #000;
}

.hist-close {
    padding: 1px;
    border-top: 1px solid #000;
    background: var(--teal);
}

.hist-close .btn {
    width: 100%;
    height: 25px;
}

/* Measure popup */
.measure-popup {
    left: 1720px;
    top: 245px;
    width: 199px;
    background: linear-gradient(100deg, #c2e2ee 0, #b0d6e4 90px, #6fb0a8 125px, #6fb0a8 138px, #d03838 150px, #d03838 160px, #72b7c4 172px) 0 0 / 100% 28px no-repeat, #8fc6d6;
}

.measure-popup .client {
    background: var(--green);
}

.mode-title {
    height: 18px;
    line-height: 18px;
    text-align: center;
    background: var(--teal);
    border-bottom: 1px solid #000;
}

.modes label {
    display: flex;
    align-items: center;
    height: 29px;
    padding-left: 5px;
    background: var(--teal);
    border-bottom: 2px solid #000;
    white-space: nowrap;
}

.mode-close {
    margin-top: 30px;
    padding: 2px;
    border: 1px solid #000;
}

.mode-close .btn {
    width: 100%;
    height: 23px;
}

/* Checklist editor */
.checklist {
    left: 1529px;
    right: -8px;
    top: 79px;
    background: linear-gradient(90deg, #4a4a4a, #333 120px, #000 160px, #000 215px, #8fd0e4 228px, #8fd0e4 262px, #6aa4b8 268px, #9bd8ea 275px, #74aec2 308px, #9bd8ea 315px, #8cc8dc) 0 0 / 100% 28px no-repeat, #333;
    padding-right: 0;
}

.checklist .win-close {
    margin-right: 5px;
    border-color: #9ab;
}

.chk-menu {
    border-bottom: 1px solid #000;
}

.chk-menu-box {
    width: 137px;
    height: 34px;
    display: flex;
    align-items: center;
    gap: 17px;
    padding-left: 11px;
    border: 2px solid;
    border-color: var(--teal-hi) #000 var(--teal-lo) var(--teal-hi);
    font: bold 15px/18px "Liberation Serif", serif;
}

.chk-name {
    height: 22px;
    padding-right: 8px;
    text-align: center;
    font: bold 15px/20px "Liberation Serif", serif;
    border-bottom: 2px solid #000;
}

.chk-body {
    display: flex;
    justify-content: space-between;
    height: 600px;
    padding: 2px 10px 0 0;
    background: var(--green);
}

.chk-items {
    width: 357px;
    overflow: hidden;
    background: var(--teal);
    border: 1px solid #000;
    border-right: 2px solid #000;
    border-left: 2px solid var(--green-lo);
}

.chk-body .thumb {
    flex: 7 0 0;
}

.chk-body .trough {
    flex: 3 0 0;
}

.check {
    height: 119px;
    padding-top: 2px;
    border-bottom: 3px solid #000;
    font-weight: normal;
}

.check-top {
    display: flex;
    align-items: center;
    gap: 4px;
    height: 30px;
    padding: 0 2px 0 4px;
}

.check-top input[type="checkbox"] {
    appearance: none;
    width: 13px;
    height: 13px;
    margin-right: 14px;
    border: 1px solid;
    border-color: var(--teal-lo) var(--teal-hi) var(--teal-hi) var(--teal-lo);
    background:
        linear-gradient(50deg, transparent 40%, #c8005a 40%, #c8005a 60%, transparent 60%) 1px 5px / 5px 6px no-repeat,
        linear-gradient(-55deg, transparent 40%, #c8005a 40%, #c8005a 60%, transparent 60%) 3px 0 / 8px 11px no-repeat;
}

.check-top .name {
    width: 100px;
    overflow: hidden;
    white-space: nowrap;
    font: bold 15px/18px "Liberation Serif", serif;
}

.check-top .erf {
    width: 44px;
    height: 30px;
    font-weight: normal;
}

.check-top input[type="text"] {
    flex: 1;
    width: 0;
    height: 30px;
    padding: 0 4px 10px;
    background: none;
    border: 2px solid;
    border-color: var(--teal-lo) var(--teal-hi) var(--teal-hi) var(--teal-lo);
}

.check-top .q {
    width: 30px;
    height: 30px;
    padding: 2px;
    font: bold 22px/20px "Liberation Sans", sans-serif;
}

.check-top .q span {
    display: block;
    border: 1px solid #000;
}

.check-btns {
    display: grid;
    grid-template-columns: 1fr 1fr 1fr;
    gap: 4px;
    margin: 5px 2px 2px;
}

.check-btns .btn {
    height: 23px;
    font-weight: bold;
}

.check-time {
    display: flex;
    height: 34px;
    border-bottom: 1px solid #000;
}

.run {
    margin-left: 67px;
    background: var(--green);
}

.zoom {
    margin: 1px 2px 0 0;
    background: var(--green);
}

.when {
    flex: 1;
    padding: 2px 31px 0 0;
    text-align: center;
    line-height: 15px;
    white-space: nowrap;
}

.flag {
    width: 17px;
    text-align: center;
    font-weight: bold;
    font-size: 12px;
    line-height: 32px;
    border-left: 1px solid #000;
}

.flag.bad {
    background: #ff1818;
}

.flag.ok {
    background: #17eb17;
}

.check-text {
    height: 20px;
    padding-left: 2px;
    line-height: 20px;
    background: var(--cream);
}

.chk-close {
    padding: 4px 9px 2px 0;
    border-top: 2px solid var(--green-hi);
}

.chk-close .btn {
    width: 100%;
    height: 24px;
}
```
